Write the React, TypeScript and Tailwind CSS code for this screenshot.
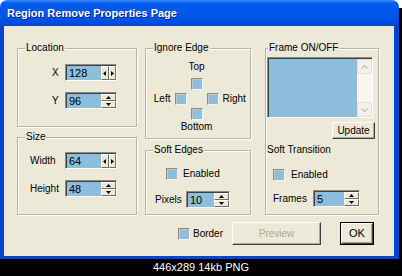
import React from 'react';

// Windows XP style "Region Remove Properties Page" dialog

const FIELD = 'bg-[#8EBEDD]';

function GroupBox({ label, className, labelClass = 'left-[7px]', children }: { label: string; className: string; labelClass?: string; children?: React.ReactNode }) {
  return (
    <div className={`relative border border-[#B7B4A4] shadow-[inset_1px_1px_0_#ffffff,1px_1px_0_#ffffff] ${className}`}>
      <span className={`absolute -top-[7px] bg-[#ECE9D8] px-[1px] leading-[12px] ${labelClass}`}>{label}</span>
      {children}
    </div>
  );
}

function Arrow({ dir }: { dir: 'up' | 'down' | 'left' | 'right' }) {
  const pts = {
    up: '0,3 5,3 2.5,0',
    down: '0,0 5,0 2.5,3',
    left: '3,0 3,5 0,2.5',
    right: '0,0 0,5 3,2.5',
  }[dir];
  const vert = dir === 'up' || dir === 'down';
  return (
    <svg width={vert ? 5 : 3} height={vert ? 3 : 5} viewBox={vert ? '0 0 5 3' : '0 0 3 5'}>
      <polygon points={pts} fill="#000" />
    </svg>
  );
}

function SpinBtn({ children }: { children: React.ReactNode }) {
  return (
    <div className="flex flex-1 items-center justify-center border border-t-white border-l-white border-b-[#716F64] border-r-[#716F64] bg-[#ECE9D8]">
      {children}
    </div>
  );
}

function SpinField({ value, className, horizontal = false }: { value: string; className: string; horizontal?: boolean }) {
  return (
    <div className={`flex h-[17px] border border-t-[#8F8C7F] border-l-[#8F8C7F] border-b-white border-r-white shadow-[inset_1px_1px_0_#404040] ${className}`}>
      <div className={`flex-1 ${FIELD} mt-[1px] ml-[1px] pl-[2px] text-[11px] leading-[14px]`}>{value}</div>
      {horizontal ? (
        <div className="mt-[1px] flex w-[15px]">
          <SpinBtn><Arrow dir="left" /></SpinBtn>
          <SpinBtn><Arrow dir="right" /></SpinBtn>
        </div>
      ) : (
        <div className="mt-[1px] flex w-[15px] flex-col">
          <SpinBtn><Arrow dir="up" /></SpinBtn>
          <SpinBtn><Arrow dir="down" /></SpinBtn>
        </div>
      )}
    </div>
  );
}

function CheckBox() {
  return (
    <div className={`h-[12px] w-[12px] shrink-0 border border-t-[#8F8C7F] border-l-[#8F8C7F] border-b-[#F4F3EE] border-r-[#F4F3EE] ${FIELD} shadow-[inset_1px_1px_0_#C9C6B8]`} />
  );
}

function Chevron({ up }: { up?: boolean }) {
  return (
    <svg width="7" height="4" viewBox="0 0 7 4">
      <polyline points={up ? '0.5,3.5 3.5,0.5 6.5,3.5' : '0.5,0.5 3.5,3.5 6.5,0.5'} fill="none" stroke="#C2C0B4" strokeWidth="1.3" />
    </svg>
  );
}

export default function App() {
  return (
    <div className="h-[276px] w-[402px] bg-[linear-gradient(#ffffff_0_8px,#000000_8px)] font-['Liberation_Sans',Arial,sans-serif] text-[10px] text-black">
      {/* Window */}
      <div className="flex h-[259px] w-[399px] flex-col rounded-t-[7px] bg-[linear-gradient(to_bottom,#3A8DFB_0px,#0860EC_3px,#0058EE_8px,#0055E8_18px,#0049DA_24px,#0046D4_26px,#0046D4_100%)]">
        {/* Title bar */}
        <div className="flex h-[26px] items-center pl-[7px] pt-[1px] text-[11px] font-bold text-white [text-shadow:1px_1px_0_#0A1E8A]">
          Region Remove Properties Page
        </div>

        {/* Body */}
        <div className="mb-[3px] ml-[4px] mr-[5px] flex-1 bg-[#ECE9D8]">
          <div className="flex pl-[13px] pt-[22px]">
            {/* Column 1 */}
            <div className="flex w-[120px] flex-col">
              <GroupBox label="Location" className="h-[79px]">
                <div className="flex flex-col gap-[11px] pl-[34px] pt-[15px]">
                  <div className="flex items-center">
                    <span className="w-[13px]">X</span>
                    <SpinField value="128" className="w-[52px]" horizontal />
                  </div>
                  <div className="flex items-center">
                    <span className="w-[13px]">Y</span>
                    <SpinField value="96" className="w-[52px]" />
                  </div>
                </div>
              </GroupBox>
              <GroupBox label="Size" className="mt-[10px] h-[78px]">
                <div className="flex flex-col gap-[11px] pl-[12px] pt-[14px]">
                  <div className="flex items-center">
                    <span className="w-[35px]">Width</span>
                    <SpinField value="64" className="w-[52px]" horizontal />
                  </div>
                  <div className="flex items-center">
                    <span className="w-[35px]">Height</span>
                    <SpinField value="48" className="w-[52px]" />
                  </div>
                </div>
              </GroupBox>
            </div>

            {/* Column 2 */}
            <div className="ml-[8px] flex w-[106px] flex-col">
              <GroupBox label="Ignore Edge" className="h-[91px]">
                <div className="grid grid-cols-[1fr_12px_1fr] gap-x-[4px] pr-[3px] pt-[12px] leading-[12px]">
                  <span className="col-span-3 text-center">Top</span>
                  <div className="col-start-2 mt-[5px]"><CheckBox /></div>
                  <div className="col-start-1 mt-[3px] flex items-center justify-end gap-[4px]">
                    <span>Left</span>
                    <CheckBox />
                  </div>
                  <div className="col-start-3 mt-[3px] flex items-center gap-[4px]">
                    <CheckBox />
                    <span>Right</span>
                  </div>
                  <div className="col-start-2 mt-[3px]"><CheckBox /></div>
                  <span className="col-span-3 mt-[1px] text-center">Bottom</span>
                </div>
              </GroupBox>
              <GroupBox label="Soft Edges" className="mt-[11px] h-[65px]">
                <div className="flex items-center gap-[5px] pl-[20px] pt-[15px]">
                  <CheckBox />
                  <span>Enabled</span>
                </div>
                <div className="mt-[10px] flex items-center pl-[9px]">
                  <span className="w-[31px]">Pixels</span>
                  <SpinField value="10" className="w-[44px]" />
                </div>
              </GroupBox>
            </div>

            {/* Column 3 */}
            <div className="ml-[14px] w-[114px]">
              <GroupBox label="Frame ON/OFF" className="flex h-[167px] flex-col" labelClass="left-[2px]">
                <div className="ml-[1px] mt-[8px] flex h-[61px] w-[106px] border border-t-[#8F8C7F] border-l-[#8F8C7F] border-b-white border-r-white shadow-[inset_1px_1px_0_#404040]">
                  <div className={`mt-[1px] ml-[1px] flex-1 ${FIELD}`} />
                  <div className="mt-[1px] flex w-[15px] flex-col justify-between bg-[#F7F6F1]">
                    <div className="flex h-[15px] items-center justify-center border border-[#E4E2D8] bg-[#F2F1EB]"><Chevron up /></div>
                    <div className="flex h-[15px] items-center justify-center border border-[#E4E2D8] bg-[#F2F1EB]"><Chevron /></div>
                  </div>
                </div>
                <button className="mr-[3px] mt-[4px] flex h-[17px] w-[43px] items-center justify-center self-end border border-t-white border-l-white border-b-[#404040] border-r-[#404040] bg-[#ECE9D8] text-[10px] leading-[12px] shadow-[inset_-1px_-1px_0_#ACA899]">
                  Update
                </button>
                <span className="ml-[1px] mt-[5px] leading-[12px]">Soft Transition</span>
                <div className="mt-[11px] flex items-center gap-[6px] pl-[7px]">
                  <CheckBox />
                  <span>Enabled</span>
                </div>
                <div className="mt-[8px] flex items-center pl-[7px]">
                  <span className="w-[40px]">Frames</span>
                  <SpinField value="5" className="w-[47px]" />
                </div>
              </GroupBox>
            </div>
          </div>

          {/* Bottom row */}
          <div className="mt-[7px] flex h-[23px] items-center pl-[174px]">
            <CheckBox />
            <span className="ml-[3px]">Border</span>
            <button className="ml-[9px] flex h-[23px] w-[89px] items-center justify-center border border-t-white border-l-white border-b-[#404040] border-r-[#404040] bg-[#ECE9D8] text-[10px] text-[#ACA899] shadow-[inset_-1px_-1px_0_#ACA899]">
              Preview
            </button>
            <div className="ml-[19px] h-[23px] w-[34px] border border-black">
              <button className="flex h-full w-full items-center justify-center border border-t-white border-l-white border-b-[#404040] border-r-[#404040] bg-[#ECE9D8] text-[11px] shadow-[inset_-1px_-1px_0_#ACA899]">
                OK
              </button>
            </div>
          </div>
        </div>
      </div>

      {/* Image caption */}
      <div className="h-[17px] bg-black text-center text-[11px] leading-[17px] text-white">446x289 14kb PNG</div>
    </div>
  );
}
